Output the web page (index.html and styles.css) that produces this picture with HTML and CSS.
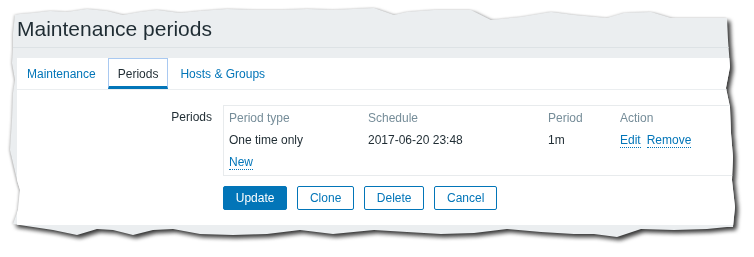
FILE: index.html
```html
<!DOCTYPE html>
<html lang="en">
<head>
<meta charset="utf-8">
<title>Maintenance periods</title>
<link rel="stylesheet" href="styles.css">
</head>
<body>
<div class="stage">
  <div class="paper">
    <header class="page-header">
      <h1>Maintenance periods</h1>
    </header>
    <div class="card">
      <ul class="tabs">
        <li class="tab"><a href="#">Maintenance</a></li>
        <li class="tab active"><a href="#">Periods</a></li>
        <li class="tab"><a href="#">Hosts &amp; Groups</a></li>
      </ul>
      <div class="form">
        <div class="form-row">
          <div class="form-label">Periods</div>
          <div class="form-field">
            <div class="periods-table">
              <div class="cell head">Period type</div>
              <div class="cell head">Schedule</div>
              <div class="cell head">Period</div>
              <div class="cell head">Action</div>
              <div class="cell">One time only</div>
              <div class="cell">2017-06-20 23:48</div>
              <div class="cell">1m</div>
              <div class="cell actions"><a class="link" href="#">Edit</a><a class="link" href="#">Remove</a></div>
              <div class="cell last"><a class="link" href="#">New</a></div>
            </div>
            <div class="buttons">
              <button class="btn primary" type="button">Update</button>
              <button class="btn" type="button">Clone</button>
              <button class="btn" type="button">Delete</button>
              <button class="btn" type="button">Cancel</button>
            </div>
          </div>
        </div>
      </div>
    </div>
  </div>
</div>
</body>
</html>
```

FILE: styles.css
```css
html, body {
  margin: 0;
  padding: 0;
  background: #ffffff;
}

body {
  font-family: "Liberation Sans", Arial, sans-serif;
  font-size: 12px;
  line-height: 14px;
  color: #1f2c33;
  width: 754px;
  height: 257px;
  overflow: hidden;
}

.stage {
  width: 754px;
  height: 257px;
  filter: drop-shadow(3px 3px 2px rgba(0, 0, 0, 0.75)) drop-shadow(-1px 0 1px rgba(0, 0, 0, 0.2));
}

.paper {
  box-sizing: border-box;
  width: 754px;
  height: 257px;
  padding: 17px 0 0 17px;
  background: #ebeef0;
  clip-path: polygon(
    15px 15px, 20px 14px, 33px 13px, 50px 11px, 67px 12px, 87px 9px, 107px 11px, 123px 15px,
    140px 12px, 157px 10px, 180px 13px, 200px 11px, 227px 9px, 253px 10px, 283px 10px,
    307px 9px, 333px 10px, 374px 8px, 394px 15px, 407px 12px, 434px 10px, 471px 10px,
    491px 20px, 521px 17px, 551px 12px, 574px 15px, 607px 18px, 624px 13px, 651px 12px,
    671px 18px, 727px 18px,
    728px 40px, 730px 67px, 726px 88px, 730px 107px, 731px 133px, 733px 157px, 732px 180px,
    735px 207px, 733px 227px,
    727px 227px, 707px 229px, 674px 230px, 641px 229px, 617px 237px, 594px 234px,
    574px 234px, 541px 232px, 507px 229px, 474px 233px, 441px 234px, 407px 232px,
    374px 230px, 333px 234px, 300px 230px, 267px 234px, 233px 235px, 200px 234px,
    173px 229px, 153px 230px, 133px 235px, 113px 230px, 97px 229px, 77px 235px,
    53px 230px, 33px 227px, 13px 224px,
    18px 210px, 20px 190px, 17px 180px, 10px 150px, 12px 120px, 13px 93px, 15px 80px,
    12px 63px, 13px 50px, 13px 33px
  );
}

.page-header {
  padding-bottom: 6px;
  border-bottom: 1px solid #dde2e5;
  margin-left: -17px;
  padding-left: 17px;
}

.page-header h1 {
  margin: 0;
  font-size: 21px;
  line-height: 24px;
  font-weight: normal;
  color: #1f2c33;
}

.card {
  margin-top: 10px;
  background: #ffffff;
  width: 760px;
  padding-bottom: 15px;
}

.tabs {
  display: flex;
  gap: 2px;
  margin: 0;
  padding: 0;
  list-style: none;
  border-bottom: 1px solid #ebeef0;
}

.tab a {
  display: block;
  padding: 8px 9px 5px;
  border: 1px solid transparent;
  border-bottom: 3px solid transparent;
  color: #0275b8;
  text-decoration: none;
  line-height: 14px;
}

.tab.active a {
  color: #1f2c33;
  border-color: #a9c9f1;
  border-bottom-color: #0275b8;
}

.form {
  padding-top: 15px;
}

.form-row {
  display: grid;
  grid-template-columns: 195px 1fr;
  column-gap: 11px;
}

.form-label {
  text-align: right;
  padding-top: 5px;
  color: #1f2c33;
}

.periods-table {
  display: grid;
  grid-template-columns: 139px 180px 72px 1fr;
  border: 1px solid #e8ebed;
  width: 540px;
}

.cell {
  padding: 5px 5px 3px;
  white-space: nowrap;
}

.cell.head {
  color: #768d99;
}

.cell.last {
  grid-column: 1 / -1;
  padding-top: 4px;
  padding-bottom: 6px;
}

.actions {
  display: flex;
  gap: 6px;
  align-items: flex-start;
}

.link {
  color: #0275b8;
  text-decoration: none;
  border-bottom: 1px dotted #0275b8;
}

.buttons {
  display: flex;
  gap: 10px;
  margin-top: 10px;
}

.btn {
  box-sizing: border-box;
  height: 24px;
  padding: 0 11.75px;
  border: 1px solid #0275b8;
  border-radius: 2px;
  background: #ffffff;
  color: #0275b8;
  font-family: "Liberation Sans", Arial, sans-serif;
  font-size: 12px;
  line-height: 14px;
  cursor: pointer;
}

.btn.primary {
  background: #0275b8;
  color: #ffffff;
}
```
